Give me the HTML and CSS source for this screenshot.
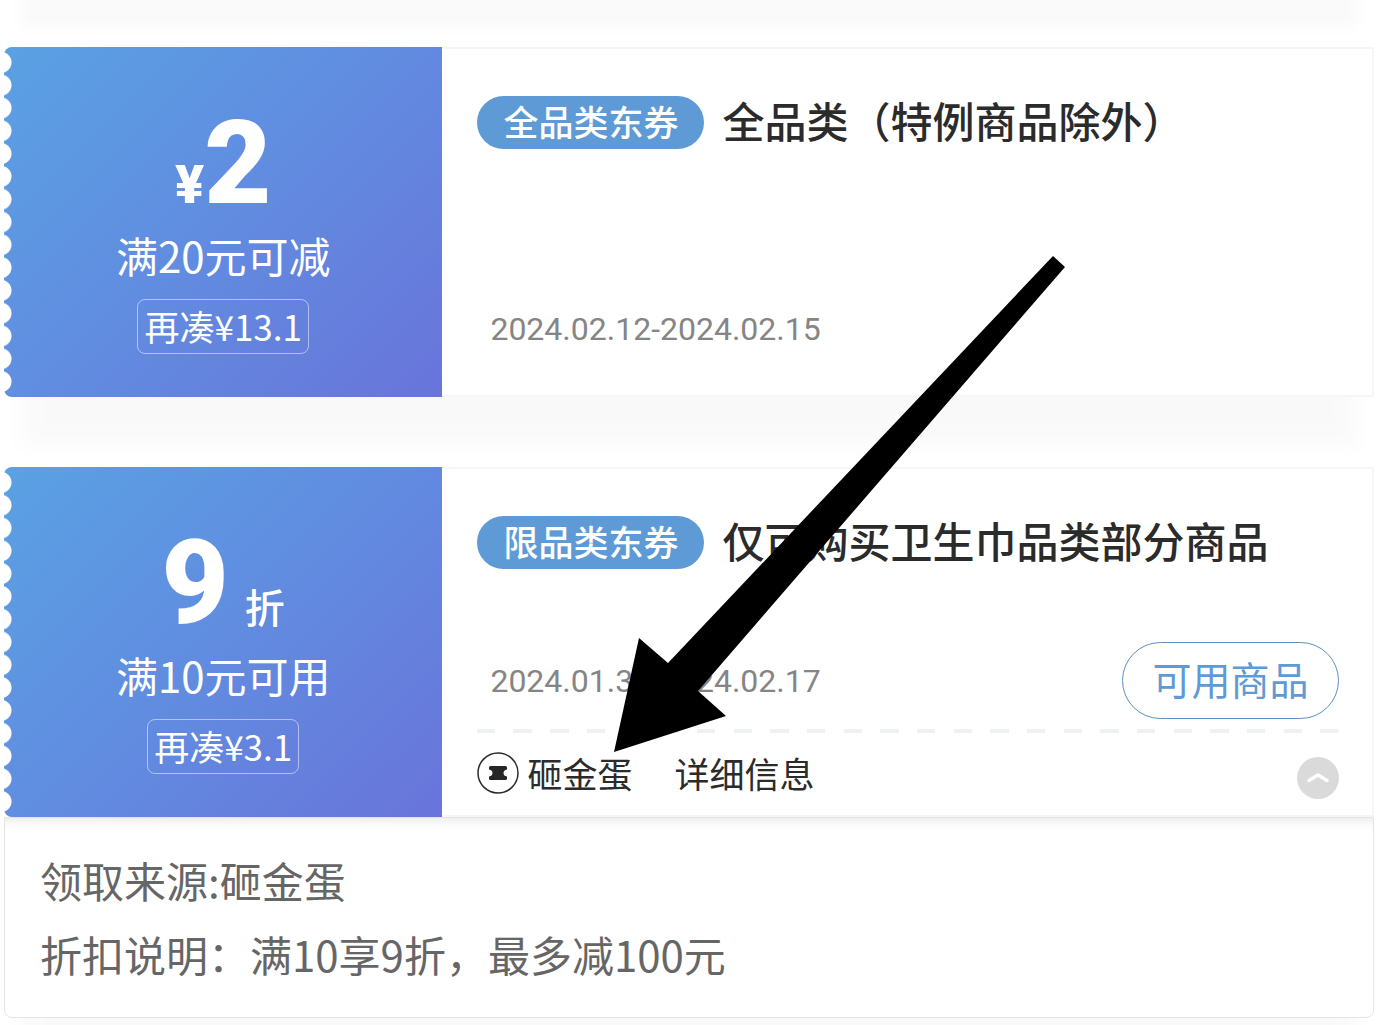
FILE: index.html
```html
<!DOCTYPE html>
<html lang="zh-CN">
<head>
<meta charset="utf-8">
<meta name="viewport" content="width=device-width, initial-scale=1">
<title>优惠券</title>
<link rel="stylesheet" href="styles.css">
</head>
<body>
<main class="coupons">
  <article class="coupon">
    <div class="ticket">
      <section class="value">
        <p class="amount"><span class="yen">¥</span><strong class="number">2</strong></p>
        <p class="condition">满20元可减</p>
        <p class="gap-hint">再凑¥13.1</p>
      </section>
      <section class="info">
        <div class="heading"><span class="tag">全品类东券</span><h2 class="title">全品类（特例商品除外）</h2></div>
        <div class="validity"><time class="date">2024.02.12-2024.02.15</time></div>
      </section>
    </div>
  </article>

  <article class="coupon">
    <div class="ticket">
      <section class="value">
        <p class="amount amount-discount"><strong class="number">9</strong><span class="unit">折</span></p>
        <p class="condition">满10元可用</p>
        <p class="gap-hint">再凑¥3.1</p>
      </section>
      <section class="info">
        <div class="heading"><span class="tag">限品类东券</span><h2 class="title">仅可购买卫生巾品类部分商品</h2></div>
        <div class="validity">
          <time class="date">2024.01.31-2024.02.17</time>
          <button class="goods" type="button">可用商品</button>
        </div>
        <div class="source">
          <svg class="source-icon" viewBox="0 0 42 42" aria-hidden="true">
            <circle cx="21" cy="21" r="20" fill="none" stroke="#2b2b2b" stroke-width="1.5"/>
            <path d="M13.500 14H28.500Q30 14 30 15.500V17.500Q26.500 18 26.500 21T30 24.500V26.500Q30 28 28.500 28H13.500Q12 28 12 26.500V24.500Q15.500 24 15.500 21T12 17.500V15.500Q12 14 13.500 14Z" fill="#262626"/>
          </svg>
          <span>砸金蛋</span>
          <span class="details-label">详细信息</span>
          <button class="toggle" type="button" aria-label="收起" aria-expanded="true">
            <svg viewBox="0 0 42 42" aria-hidden="true"><path d="M12 23.500L21 18L30 23.500" fill="none" stroke="#fff" stroke-width="3.500" stroke-linecap="round" stroke-linejoin="round"/></svg>
          </button>
        </div>
      </section>
    </div>
    <div class="details">
      <p>领取来源:砸金蛋</p>
      <p>折扣说明：满10享9折，最多减100元</p>
    </div>
  </article>

  <svg class="arrow" viewBox="0 0 452 496" aria-hidden="true"><path d="M0 496L25 382L54 407L439 0L451 11L84 435L112 460Z"/></svg>
</main>
</body>
</html>
```
FILE: styles.css
```css
* { box-sizing: border-box; }

body {
  margin: 0;
  background: #fff;
  color: #2b2b2b;
  font-family: "Noto Sans CJK SC", sans-serif;
  font-size: 35px;
  line-height: 42px;
}

p, h2 { margin: 0; }

button {
  padding: 0;
  font: inherit;
  cursor: pointer;
}

.coupons {
  position: relative;
  padding: 0 14px 0 4px;
  overflow: hidden;
}

/* tail of the shadow cast by the list above */
.coupons::before {
  content: "";
  display: block;
  height: 20px;
  margin: 0 24px 27px;
  background: #fafafa;
  box-shadow: 0 0 16px 8px #fafafa;
}

.coupon {
  margin-bottom: 70px;
  background: #fff;
  border-radius: 8px;
  box-shadow: 0 66px 20px -16px rgba(0, 0, 0, 0.025);
}

.coupon:last-of-type { margin-bottom: 7px; }

.ticket {
  display: grid;
  grid-template-columns: 32% 1fr;
  min-height: 350px;
}

.value {
  position: relative;
  display: flex;
  flex-direction: column;
  align-items: center;
  padding-top: 68px;
  border-radius: 8px 0 0 8px;
  background: linear-gradient(135deg, #5aa1e3 0%, #618ce0 50%, #6974da 100%);
  color: #fff;
}

/* perforated edge */
.value::before {
  content: "";
  position: absolute;
  inset: 4px auto 4px 0;
  width: 8px;
  background: radial-gradient(circle at -3px 50%, #fff 10px, transparent 11px) 0 0 / 8px 23px round;
}

.amount {
  display: flex;
  align-items: baseline;
  height: 114px;
  line-height: 96px;
}

.number {
  font-family: Roboto, sans-serif;
  font-size: 116px;
  font-weight: 900;
}

.yen {
  font-family: Roboto, sans-serif;
  font-size: 54px;
  font-weight: 900;
}

.amount-discount { gap: 16px; }

.unit {
  font-size: 40px;
  font-weight: 500;
}

.condition {
  margin-bottom: 18px;
  font-size: 42px;
  line-height: 52px;
}

.gap-hint {
  padding: 0 6px 2px;
  border: 1px solid rgba(255, 255, 255, 0.5);
  border-radius: 8px;
  line-height: 51px;
}

.info {
  display: flex;
  flex-direction: column;
  padding: 47px 33px 16px 35px;
  border: 2px solid #f6f6f6;
  border-left: 0;
}

.heading {
  display: flex;
  align-items: flex-start;
  gap: 18px;
}

.tag {
  padding: 0 26px 4px;
  border-radius: 27px;
  background: #5e9ad5;
  color: #fff;
  font-weight: 500;
  line-height: 49px;
}

.title {
  font-size: 42px;
  font-weight: 500;
  line-height: 47px;
}

.validity {
  display: flex;
  align-items: center;
  justify-content: space-between;
  height: 77px;
  margin-top: auto;
  padding-left: 13px;
}

.validity:last-child { margin-bottom: 12px; }

.date {
  color: #858585;
  font-family: Roboto, sans-serif;
  font-size: 32px;
}

.goods {
  width: 217px;
  height: 77px;
  padding-bottom: 6px;
  border: 1px solid #5e8fc0;
  border-radius: 39px;
  background: #fff;
  color: #5e9ad5;
  font-size: 39px;
}

.source {
  display: flex;
  align-items: flex-start;
  gap: 8px;
  margin-top: 10px;
  padding-top: 23px;
  background: repeating-linear-gradient(90deg, #f0f2f2 0 calc(100% / 47), transparent 0 calc(200% / 47)) top / 100% 4px no-repeat;
}

.source-icon {
  width: 42px;
  height: 42px;
}

.details-label { margin-left: 34px; }

.toggle {
  width: 42px;
  height: 42px;
  margin-top: 5px;
  margin-left: auto;
  border: 0;
  border-radius: 50%;
  background: #dadada;
}

.toggle svg { display: block; }

.details {
  padding: 25px 35px 26px;
  border: 1px solid #e4e4e4;
  border-radius: 0 0 8px 8px;
  box-shadow: inset 0 12px 12px -10px rgba(0, 0, 0, 0.1);
  color: #666;
  font-size: 42px;
  line-height: 74px;
}

/* annotation pointing at the coupon source */
.arrow {
  position: absolute;
  top: 256px;
  left: 614px;
  width: 452px;
  height: 496px;
  pointer-events: none;
}
```
